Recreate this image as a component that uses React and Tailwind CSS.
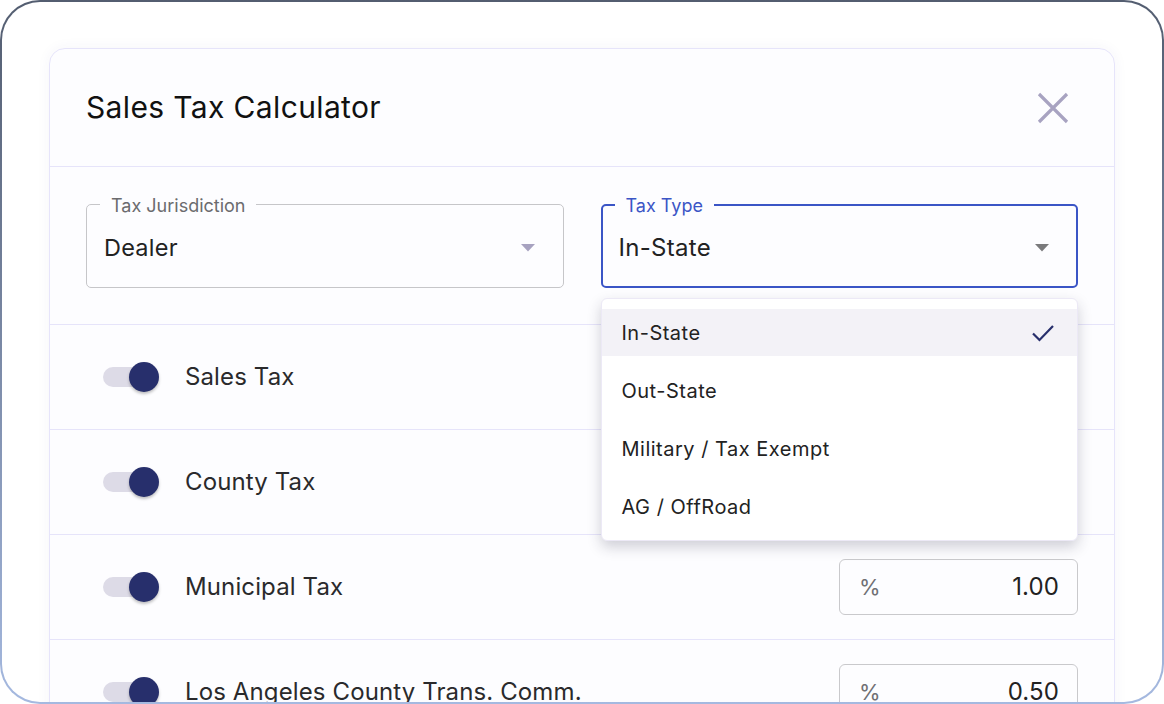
import React from "react";
import { useState } from "react";

const taxTypes = ["In-State", "Out-State", "Military / Tax Exempt", "AG / OffRoad"];

const taxRows = [
  { name: "Sales Tax", rate: "7.25" },
  { name: "County Tax", rate: "0.25" },
  { name: "Municipal Tax", rate: "1.00" },
  { name: "Los Angeles County Trans. Comm.", rate: "0.50" },
];

const Caret = ({ color }) => (
  <svg width="14" height="8" viewBox="0 0 14 8" className="shrink-0">
    <path d="M0 0 L14 0 L7 7.5 Z" fill={color} />
  </svg>
);

const Toggle = () => (
  <div className="relative w-[60px] h-[30px] ml-[14px] shrink-0">
    <div className="absolute left-[3px] top-[5px] w-[52px] h-[20px] rounded-full bg-[#dddbe7]" />
    <div className="absolute right-[1px] top-0 w-[30px] h-[30px] rounded-full bg-[#272f6c] shadow-[0_2px_3px_rgba(0,0,0,0.25)]" />
  </div>
);

const App = () => {
  const [taxType, setTaxType] = useState("In-State");
  const [open, setOpen] = useState(true);

  return (
    <div
      className="w-[1164px] h-[704px] p-[2px] rounded-[40px] bg-gradient-to-b from-[#535d70] to-[#a5b9e0]"
      style={{ fontFamily: "Inter, 'Noto Sans', sans-serif" }}
    >
      <div className="w-full h-full bg-white rounded-[38px] overflow-hidden pt-[46px] pl-[47px]">
        <div className="w-[1066px] bg-[#fdfdff] border border-[#e6e4fa] rounded-[16px] shadow-[0_0_14px_rgba(60,50,140,0.05)]">
          {/* header */}
          <div className="h-[118px] flex items-center justify-between pl-[36px] pr-[45px] border-b border-[#e6e4fa]">
            <h1 className="text-[30px] text-[#111] tracking-[0.012em]">Sales Tax Calculator</h1>
            <svg width="32" height="32" viewBox="0 0 32 32">
              <path d="M2 2 L30 30 M30 2 L2 30" stroke="#a8a3c1" strokeWidth="3.2" />
            </svg>
          </div>

          {/* selects */}
          <div className="px-[36px] pt-[37px] pb-[36px] grid grid-cols-2 gap-[37px] border-b border-[#e6e4fa]">
            <div className="relative h-[84px] border border-[#c6c6c9] rounded-[5px] flex items-center justify-between pl-[17px] pr-[28px] pt-[3px]">
              <span className="absolute left-[13px] -top-[11px] px-[11px] bg-[#fdfdff] text-[18px] text-[#6b6b6e] leading-[24px]">
                Tax Jurisdiction
              </span>
              <span className="text-[23.5px] text-[#222] tracking-[0.01em]">Dealer</span>
              <Caret color="#a7a2c0" />
            </div>

            <div className="relative h-[84px] border-2 border-[#3b55c6] rounded-[5px] flex items-center justify-between pl-[16px] pr-[27px] pt-[3px]">
              <span className="absolute left-[12px] -top-[12px] px-[11px] bg-[#fdfdff] text-[18px] text-[#3b55c6] leading-[24px]">
                Tax Type
              </span>
              <span className="text-[24px] text-[#222] tracking-[0.012em]" onClick={() => setOpen(!open)}>
                {taxType}
              </span>
              <Caret color="#7a7a7c" />

              {open && (
                <div className="absolute left-[-2px] right-[-2px] top-[92px] z-10 bg-white border border-[#ece9f6] rounded-[6px] pt-[10px] pb-[4px] shadow-[0_6px_14px_rgba(40,40,70,0.22)]">
                  {taxTypes.map((t, idx) => (
                    <div
                      key={t}
                      onClick={() => setTaxType(t)}
                      className={
                        idx === 0
                          ? "h-[47px] flex items-center justify-between pl-[20px] pr-[22px] bg-[#f3f2f7]"
                          : idx === 1
                          ? "h-[58px] mt-[6px] flex items-center justify-between pl-[20px] pr-[22px]"
                          : "h-[58px] flex items-center justify-between pl-[20px] pr-[22px]"
                      }
                    >
                      <span className="text-[20px] text-[#222] tracking-[0.025em]">{t}</span>
                      {t === taxType && (
                        <svg width="24" height="20" viewBox="0 0 24 20">
                          <path d="M2 10.5 L8.5 17 L22 3" fill="none" stroke="#272f6c" strokeWidth="2.2" />
                        </svg>
                      )}
                    </div>
                  ))}
                </div>
              )}
            </div>
          </div>

          {/* tax rows */}
          {taxRows.map((row) => (
            <div
              key={row.name}
              className="h-[105px] flex items-center justify-between pl-[36px] pr-[36px] border-b border-[#e6e4fa]"
            >
              <div className="flex items-center gap-[25px]">
                <Toggle />
                <span className="text-[24px] text-[#2a2a2c] tracking-[0.005em]">{row.name}</span>
              </div>
              <div className="w-[239px] h-[56px] border border-[#c9c9cc] rounded-[6px] flex items-center justify-between pl-[19px] pr-[18px]">
                <span className="text-[22px] text-[#707074]">%</span>
                <span className="text-[24px] text-[#222] tracking-[0.005em]">{row.rate}</span>
              </div>
            </div>
          ))}
        </div>
      </div>
    </div>
  );
};

export default App;
